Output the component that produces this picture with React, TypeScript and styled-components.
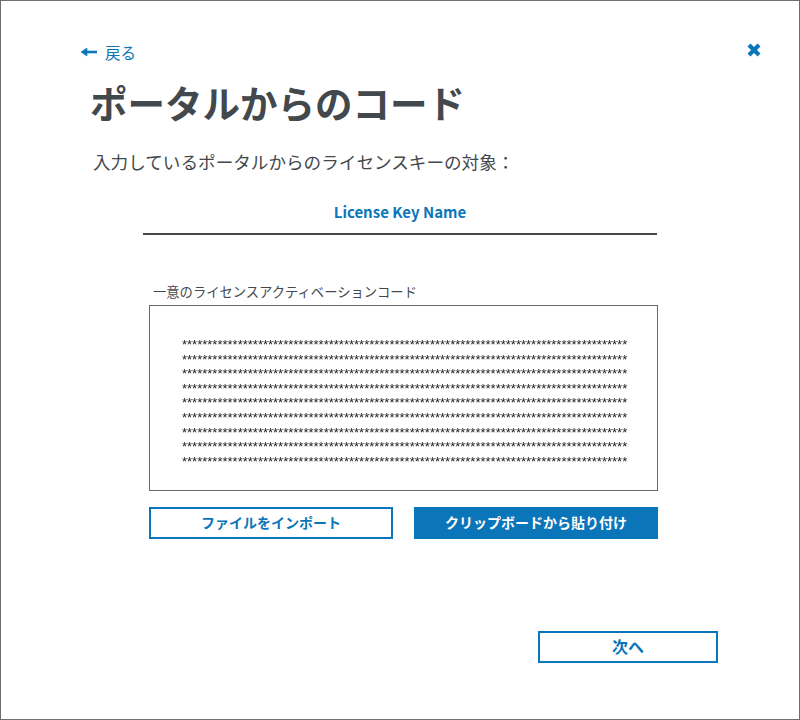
import { createGlobalStyle, styled } from 'styled-components'

const BLUE = '#0b75b9'
const INK = '#43484d'

const GlobalStyle = createGlobalStyle`
  html, body {
    margin: 0;
    padding: 0;
    background: #fff;
  }
  * {
    box-sizing: border-box;
  }
`

const Window = styled.main`
  width: 800px;
  height: 720px;
  border: 1px solid #6e6e6e;
  background: #fff;
  display: flex;
  flex-direction: column;
  padding: 39px 81px 56px 80px;
  font-family: 'Noto Sans CJK JP', 'Noto Sans', sans-serif;
  color: ${INK};
`

const TopBar = styled.div`
  display: flex;
  justify-content: space-between;
  align-items: center;
  height: 24px;
`

const BackLink = styled.a`
  display: flex;
  align-items: center;
  gap: 8px;
  font-size: 15.5px;
  line-height: 24px;
  color: ${BLUE};
`

const CloseButton = styled.button`
  display: flex;
  border: 0;
  padding: 0;
  background: none;
  margin-right: -44px;
  margin-top: -5px;
`

const Title = styled.h1`
  margin: 10px 0 0 9px;
  font-size: 37.5px;
  line-height: 56px;
  font-weight: 700;
  color: ${INK};
`

const Subtitle = styled.p`
  margin: 18px 0 0 12px;
  font-size: 17.6px;
  line-height: 28px;
`

const KeyHeader = styled.div`
  margin: 23px 0 0 62px;
  width: 514px;
  height: 36px;
  border-bottom: 2px solid ${INK};
  text-align: center;
  font-size: 15px;
  font-weight: 700;
  line-height: 25px;
  color: ${BLUE};
`

const Form = styled.section`
  margin: 43px 0 0 68px;
  width: 509px;
  display: flex;
  flex-direction: column;
`

const FieldLabel = styled.label`
  margin-left: 4px;
  font-size: 13.3px;
  line-height: 27px;
`

const CodeBox = styled.div`
  height: 186px;
  border: 1px solid #6b6b6b;
  padding: 32px 0 0 32px;
  will-change: transform;
`

const CodeLine = styled.div`
  font-family: 'Liberation Sans', sans-serif;
  font-size: 13px;
  line-height: 14.62px;
  height: 14.62px;
  white-space: nowrap;
  color: #222;
`

const ButtonRow = styled.div`
  margin-top: 16px;
  display: flex;
  justify-content: space-between;
`

const ActionButton = styled.button<{ $primary?: boolean; $wide?: boolean }>`
  width: ${p => (p.$wide ? '180px' : '244px')};
  height: 32px;
  border: 2px solid ${BLUE};
  background: ${p => (p.$primary ? BLUE : '#fff')};
  color: ${p => (p.$primary ? '#fff' : BLUE)};
  font-family: inherit;
  font-size: ${p => (p.$wide ? '16px' : '14px')};
  font-weight: 700;
  line-height: 24px;
  padding: 0 0 2px;
`

const Footer = styled.footer`
  margin-top: auto;
  display: flex;
  justify-content: flex-end;
`

const stars = '*'.repeat(88)

export default function App() {
  return (
    <>
      <GlobalStyle />
      <Window>
        <TopBar>
          <BackLink>
            <svg width="16" height="10" viewBox="0 0 16 10">
              <path d="M0 5 L6 1 V4 H16 V6 H6 V9 Z" fill={BLUE} stroke={BLUE} strokeWidth="0.6" strokeLinejoin="round" />
            </svg>
            戻る
          </BackLink>
          <CloseButton aria-label="閉じる">
            <svg width="16" height="16" viewBox="0 0 16 16">
              <path d="M3 3 L13 13 M13 3 L3 13" stroke={BLUE} strokeWidth="4.2" strokeLinecap="butt" />
            </svg>
          </CloseButton>
        </TopBar>
        <Title>ポータルからのコード</Title>
        <Subtitle>入力しているポータルからのライセンスキーの対象：</Subtitle>
        <KeyHeader>License Key Name</KeyHeader>
        <Form>
          <FieldLabel>一意のライセンスアクティベーションコード</FieldLabel>
          <CodeBox>
            {Array.from({ length: 9 }, (_, i) => (
              <CodeLine key={i}>{stars}</CodeLine>
            ))}
          </CodeBox>
          <ButtonRow>
            <ActionButton>ファイルをインポート</ActionButton>
            <ActionButton $primary>クリップボードから貼り付け</ActionButton>
          </ButtonRow>
        </Form>
        <Footer>
          <ActionButton $wide>次へ</ActionButton>
        </Footer>
      </Window>
    </>
  )
}
